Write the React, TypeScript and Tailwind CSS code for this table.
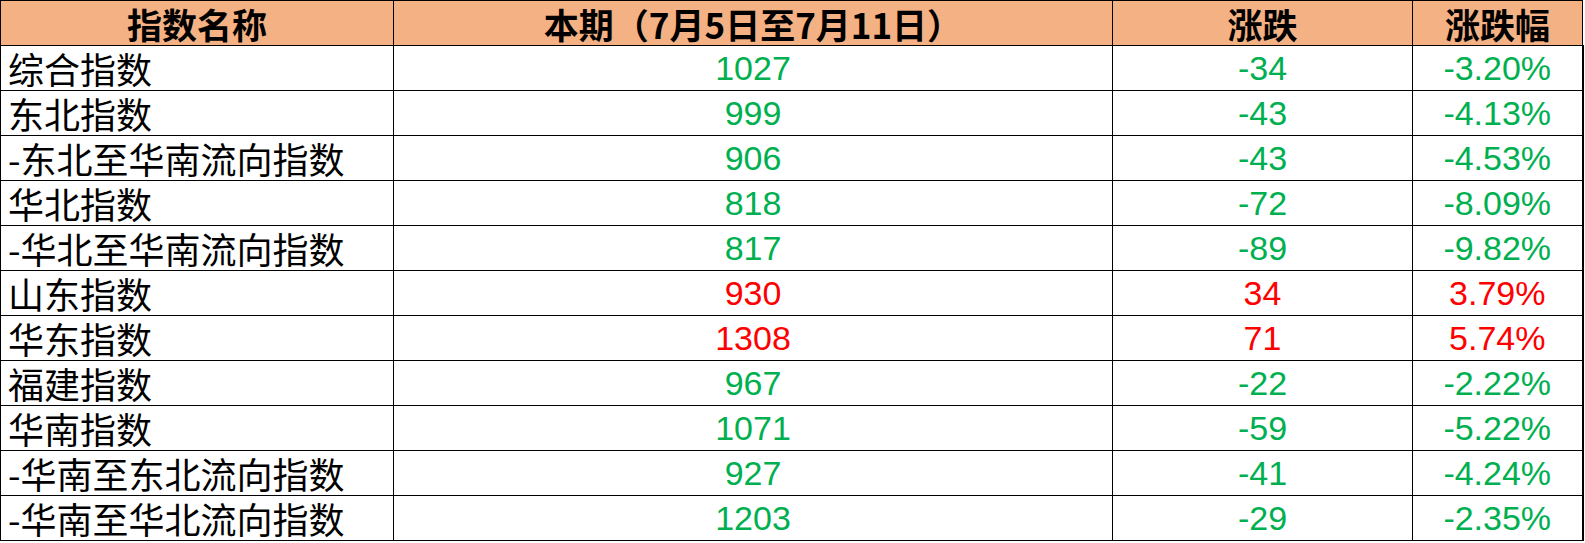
type Row = {
  name: string;
  value: string;
  change: string;
  pct: string;
  up: boolean;
};

const rows: Row[] = [
  { name: "综合指数", value: "1027", change: "-34", pct: "-3.20%", up: false },
  { name: "东北指数", value: "999", change: "-43", pct: "-4.13%", up: false },
  { name: "-东北至华南流向指数", value: "906", change: "-43", pct: "-4.53%", up: false },
  { name: "华北指数", value: "818", change: "-72", pct: "-8.09%", up: false },
  { name: "-华北至华南流向指数", value: "817", change: "-89", pct: "-9.82%", up: false },
  { name: "山东指数", value: "930", change: "34", pct: "3.79%", up: true },
  { name: "华东指数", value: "1308", change: "71", pct: "5.74%", up: true },
  { name: "福建指数", value: "967", change: "-22", pct: "-2.22%", up: false },
  { name: "华南指数", value: "1071", change: "-59", pct: "-5.22%", up: false },
  { name: "-华南至东北流向指数", value: "927", change: "-41", pct: "-4.24%", up: false },
  { name: "-华南至华北流向指数", value: "1203", change: "-29", pct: "-2.35%", up: false },
];

const cjk = { fontFamily: "'Noto Sans CJK SC', 'Noto Sans', sans-serif" };
const num = { fontFamily: "'Liberation Sans', Arial, 'Noto Sans CJK SC', sans-serif" };

export default function App() {
  return (
    <div className="w-[1585px] h-[543px] bg-white overflow-hidden">
      <table className="table-fixed border-collapse w-[1582px]">
        <colgroup>
          <col className="w-[393px]" />
          <col className="w-[719px]" />
          <col className="w-[300px]" />
          <col className="w-[170px]" />
        </colgroup>
        <thead>
          <tr className="h-[45px] bg-[#f4b183]">
            {["指数名称", "本期（7月5日至7月11日）", "涨跌", "涨跌幅"].map((h) => (
              <th
                key={h}
                className="border border-black text-center text-[35px] font-bold leading-[43px] text-black p-0"
                style={cjk}
              >
                {h}
              </th>
            ))}
          </tr>
        </thead>
        <tbody>
          {rows.map((r) => {
            const color = r.up ? "text-[#ff0000]" : "text-[#00b050]";
            return (
              <tr key={r.name} className="h-[45px]">
                <td
                  className="border border-black text-left pl-[7px] text-[36px] leading-[43px] text-black whitespace-nowrap p-0"
                  style={cjk}
                >
                  {r.name}
                </td>
                <td className={`border border-black text-center text-[34px] leading-[43px] p-0 ${color}`} style={num}>
                  {r.value}
                </td>
                <td className={`border border-black text-center text-[34px] leading-[43px] p-0 ${color}`} style={num}>
                  {r.change}
                </td>
                <td className={`border border-black border-r-2 text-center text-[34px] leading-[43px] p-0 ${color}`} style={num}>
                  {r.pct}
                </td>
              </tr>
            );
          })}
        </tbody>
      </table>
    </div>
  );
}
